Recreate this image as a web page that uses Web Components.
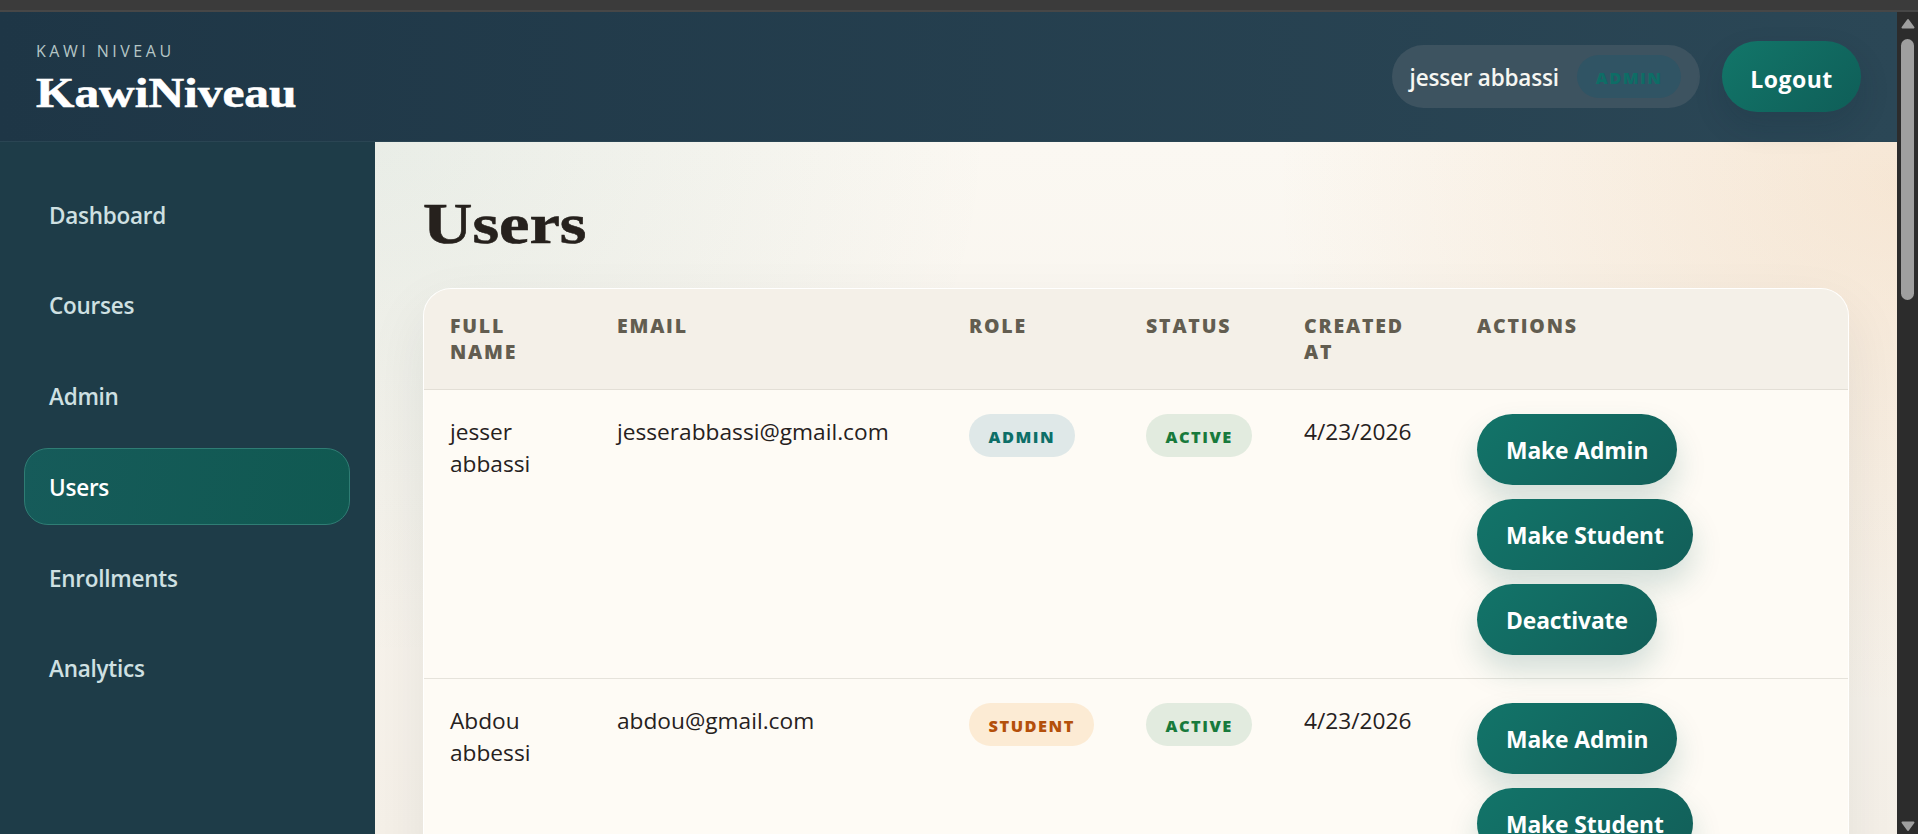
<!DOCTYPE html>
<html lang="en"><head><meta charset="utf-8"><title>KawiNiveau Users</title>
<style>
html,body{margin:0;height:100%;overflow:hidden;background:#2c2c2c}
body{font-family:"Open Sans","Noto Sans",sans-serif}
</style></head><body>
<app-window>
  <app-header slot="header"></app-header>
  <side-nav slot="nav" active="Users" items="Dashboard,Courses,Admin,Users,Enrollments,Analytics"></side-nav>
  <users-page slot="main">
    <user-row name="jesser abbassi" email="jesserabbassi@gmail.com" role="ADMIN" status="ACTIVE" created="4/23/2026" actions="Make Admin,Make Student,Deactivate"></user-row>
    <user-row name="Abdou abbessi" email="abdou@gmail.com" role="STUDENT" status="ACTIVE" created="4/23/2026" actions="Make Admin,Make Student"></user-row>
  </users-page>
</app-window>
<script>
const SANS='"Open Sans","Noto Sans",sans-serif';
const SERIF='"Liberation Serif",serif';
function def(name,html){
  customElements.define(name,class extends HTMLElement{
    connectedCallback(){
      if(this.shadowRoot)return;
      const r=this.attachShadow({mode:'open'});
      r.innerHTML=typeof html==='function'?html(this):html;
    }
  });
}
def('app-window',`<style>
:host{display:flex;flex-direction:column;height:834px;width:1918px;overflow:hidden}
.strip{flex:none;height:10px;background:#3b3b3b;border-bottom:2px solid #474747}
.view{flex:1;display:flex;min-height:0}
.page{flex:1;min-width:0;display:flex;flex-direction:column}
.body{flex:1;min-height:0;display:flex}
</style>
<div class="strip"></div>
<div class="view">
  <div class="page"><slot name="header"></slot><div class="body"><slot name="nav"></slot><slot name="main"></slot></div></div>
  <fake-scrollbar></fake-scrollbar>
</div>`);
def('fake-scrollbar',`<style>
:host{flex:none;width:21px;background:#2c2c2c;display:flex;flex-direction:column;align-items:center;box-sizing:border-box;padding:6px 0 2px}
svg{display:block;flex:none}
.thumb{flex:none;width:13px;height:261px;border-radius:7px;background:#9f9f9f;margin-top:10px}
.sp{flex:1}
</style>
<svg width="14" height="11" viewBox="0 0 14 11"><path d="M7 2 L12.5 9.5 H1.5 Z" fill="#9f9f9f" stroke="#9f9f9f" stroke-width="2" stroke-linejoin="round"/></svg>
<div class="thumb"></div><div class="sp"></div>
<svg width="14" height="11" viewBox="0 0 14 11"><path d="M7 9 L12.5 1.5 H1.5 Z" fill="#9f9f9f" stroke="#9f9f9f" stroke-width="2" stroke-linejoin="round"/></svg>`);
def('pill-badge',`<style>
:host{display:inline-flex;align-items:center;justify-content:center;box-sizing:border-box;height:43px;padding:3px var(--px,19.5px) 0;border-radius:22px;font:800 16.4px/1 ${SANS};letter-spacing:1.5px;background:var(--bg);color:var(--fg)}
</style><slot></slot>`);
def('app-header',`<style>
:host{display:flex;flex:none;position:relative;z-index:2;align-items:center;justify-content:space-between;box-sizing:border-box;height:130px;padding:0 36px;background:linear-gradient(90deg,#1e3646,#2b4756);border-bottom:1px solid #2a4553}
.brand{padding-top:4.6px}
.eyebrow{font:400 16px/20px ${SANS};letter-spacing:3.5px;color:#b5c6c6;margin-bottom:8.4px}
.title{font:700 42px/48px ${SERIF};color:#fff;-webkit-text-stroke:.6px #fff;transform:scaleX(1.175);transform-origin:0 50%}
.right{display:flex;align-items:center;gap:22px}
.chip{display:flex;align-items:center;gap:18.6px;box-sizing:border-box;height:63px;padding:0 19px 0 18px;border-radius:32px;background:#3d5360;color:#f6f6f2;font:600 22.5px/1 ${SANS};letter-spacing:-.2px}
.chip span{padding-top:3px}
.chip pill-badge{--bg:#305464;--fg:#0e6d66;--px:18.5px;letter-spacing:1.5px}
.logout{box-sizing:border-box;height:71px;width:139px;border-radius:36px;display:flex;align-items:center;justify-content:center;padding-top:5px;color:#fff;font:700 23px/1 ${SANS};letter-spacing:.45px;background:linear-gradient(135deg,#127669,#0f5e58);box-shadow:0 14px 30px rgba(15,40,50,.16)}
</style>
<div class="brand"><div class="eyebrow">KAWI NIVEAU</div><div class="title">KawiNiveau</div></div>
<div class="right"><div class="chip"><span>jesser abbassi</span><pill-badge>ADMIN</pill-badge></div><div class="logout">Logout</div></div>`);
def('side-nav',h=>`<style>
:host{flex:none;display:flex;flex-direction:column;gap:13.7px;width:375px;box-sizing:border-box;padding:34px 25px 0 24px;background:#1e3c48}
.item{box-sizing:border-box;height:77px;display:flex;align-items:center;padding:3px 24px 0;border:1px solid transparent;border-radius:24px;color:#cfe0e2;font:600 22.5px/1 ${SANS};letter-spacing:-.25px}
.on{color:#fff;background:linear-gradient(100deg,#165b5a,#105951);border-color:#2f7d74}
</style>`+h.getAttribute('items').split(',').map(t=>`<div class="item${t===h.getAttribute('active')?' on':''}">${t}</div>`).join(''));
def('users-page',`<style>
:host{flex:1;min-width:0;display:block;overflow:hidden;box-sizing:border-box;padding:47px 48px 0;background:radial-gradient(620px 520px at 100% 6%,rgba(230,170,110,.22),transparent),radial-gradient(620px 520px at 0 0,rgba(20,110,100,.08),transparent),linear-gradient(#fbf8f2,#f5f0e8)}
h1{margin:0 0 29px;font:700 58px/70px ${SERIF};color:#26211d;-webkit-text-stroke:.6px #26211d;transform:scaleX(1.18);transform-origin:0 50%}
.card{border:1px solid rgba(255,255,255,.85);border-radius:28px;overflow:hidden;background:#fefbf5;box-shadow:0 24px 60px rgba(30,40,50,.08)}
.head{display:grid;grid-template-columns:var(--cols);height:101px;box-sizing:border-box;background:#f4f0e8;border-bottom:1px solid #e3dfd6;color:#625d50;font:800 19.5px/26px ${SANS};letter-spacing:1.8px}
.head div{padding:24px 26px 0}
:host{--cols:167px 352px 177px 158px 173px 1fr}
</style>
<h1>Users</h1>
<div class="card">
<div class="head"><div>FULL<br>NAME</div><div>EMAIL</div><div>ROLE</div><div>STATUS</div><div>CREATED<br>AT</div><div>ACTIONS</div></div>
<slot></slot>
</div>`);
def('user-row',h=>{
 const a=n=>h.getAttribute(n);
 const role=a('role');
 const rc=role==='ADMIN'?'--bg:#dfe8e8;--fg:#0d6f68':'--bg:#fcebd4;--fg:#b4500b';
 return `<style>
:host{display:grid;grid-template-columns:var(--cols);border-bottom:1px solid #e6e3db;color:#26211d;font:400 22.7px/32px ${SANS}}
.c{padding:24px 26px 23px;min-width:0}
.t{padding-top:26px}
.acts{display:flex;flex-direction:column;align-items:flex-start;gap:14px}
</style>
<div class="c t">${a('name').replace(' ','<br>')}</div>
<div class="c t">${a('email')}</div>
<div class="c"><pill-badge style="${rc}">${role}</pill-badge></div>
<div class="c"><pill-badge style="--bg:#e2ebdf;--fg:#187a3c">${a('status')}</pill-badge></div>
<div class="c t">${a('created')}</div>
<div class="c acts">${a('actions').split(',').map(t=>`<action-btn>${t}</action-btn>`).join('')}</div>`;
});
def('action-btn',`<style>
:host{display:inline-flex;align-items:center;box-sizing:border-box;height:71px;padding:4px 29px 0;border-radius:36px;color:#fff;font:700 22.8px/1 ${SANS};letter-spacing:-.1px;background:linear-gradient(135deg,#127469,#125f59);box-shadow:0 16px 30px rgba(15,95,88,.18)}
</style><slot></slot>`);
</script>
</body></html>
